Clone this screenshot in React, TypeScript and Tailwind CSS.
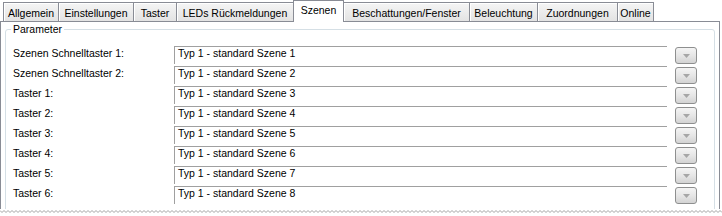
import React from 'react';

const tabs: { label: string; w: string; active?: boolean }[] = [
  { label: 'Allgemein', w: 'w-[56px] border-l' },
  { label: 'Einstellungen', w: 'w-[75px]' },
  { label: 'Taster', w: 'w-[43px]' },
  { label: 'LEDs Rückmeldungen', w: 'w-[117px]' },
  { label: 'Szenen', w: 'w-[51px]', active: true },
  { label: 'Beschattungen/Fenster', w: 'w-[126px]' },
  { label: 'Beleuchtung', w: 'w-[68px]' },
  { label: 'Zuordnungen', w: 'w-[80px]' },
  { label: 'Online', w: 'w-[36px]' },
];

const rows = [
  ['Szenen Schnelltaster 1:', 'Typ 1 - standard Szene 1'],
  ['Szenen Schnelltaster 2:', 'Typ 1 - standard Szene 2'],
  ['Taster 1:', 'Typ 1 - standard Szene 3'],
  ['Taster 2:', 'Typ 1 - standard Szene 4'],
  ['Taster 3:', 'Typ 1 - standard Szene 5'],
  ['Taster 4:', 'Typ 1 - standard Szene 6'],
  ['Taster 5:', 'Typ 1 - standard Szene 7'],
  ['Taster 6:', 'Typ 1 - standard Szene 8'],
];

function Tab({ label, w, active }: { label: string; w: string; active?: boolean }) {
  if (active) {
    return (
      <div
        className={`${w} relative z-10 -mb-px -ml-px h-[22px] border-x border-t border-[#898c95] bg-white pt-[3px] text-center leading-[12px]`}
      >
        {label}
      </div>
    );
  }
  return (
    <div
      className={`${w} h-[19px] border-t border-r border-[#898c95] bg-linear-to-b from-[#f5f5f5] to-[#e3e3e3] pt-[4px] text-center leading-[12px] shadow-[inset_1px_1px_0_#ffffff]`}
    >
      {label}
    </div>
  );
}

function DropButton() {
  return (
    <div className="ml-[8px] mt-px flex h-[17px] w-[22px] items-center justify-center rounded-[3px] border border-[#8e8f8f] bg-linear-to-b from-[#f4f4f4] via-[#e6e6e6] to-[#d3d3d3]">
      <svg width="7" height="4" viewBox="0 0 7 4">
        <path d="M0 0 H7 L3.5 4 Z" fill="#a6a6a6" />
      </svg>
    </div>
  );
}

export default function App() {
  return (
    <div
      className="relative h-[216px] w-[722px] overflow-hidden bg-white text-[10.5px] text-black"
      style={{ fontFamily: '"Liberation Sans", Arial, sans-serif' }}
    >
      {/* Tab strip */}
      <div className="flex h-[21px] items-end pl-[3px]">
        {tabs.map((t) => (
          <Tab key={t.label} {...t} />
        ))}
      </div>

      {/* Tab page */}
      <div className="h-[200px] w-[720px] border-x border-t border-[#898c95] px-[4px] pt-[7px]">
        <div className="relative h-[190px] rounded-[3px] border border-[#d5dfe5]">
          <span className="absolute -top-[7px] left-[5px] bg-white px-[2px] leading-[12px]">
            Parameter
          </span>
          <div className="pt-[16px]">
            {rows.map(([label, value]) => (
              <div key={label} className="flex h-[20px]">
                <div className="w-[168px] pl-[7px] pt-px leading-[12px]">{label}</div>
                <div className="h-[18px] w-[493px] border-t border-l border-[#a0a0a0] pl-[3px] leading-[12px]">
                  {value}
                </div>
                <DropButton />
              </div>
            ))}
          </div>
        </div>
      </div>

      {/* torn edge of the screenshot */}
      <div className="absolute bottom-0 left-0 h-[7px] w-[722px] bg-white">
        <svg width="722" height="7" viewBox="0 0 722 7" className="block">
          <path
            d={Array.from({ length: 181 }, (_, i) => `${i === 0 ? 'M' : 'L'}${i * 4} 1.5 L${i * 4 + 2} 3.5`).join(' ')}
            fill="none"
            stroke="#a3a3a3"
            strokeWidth="1"
          />
        </svg>
      </div>
    </div>
  );
}
